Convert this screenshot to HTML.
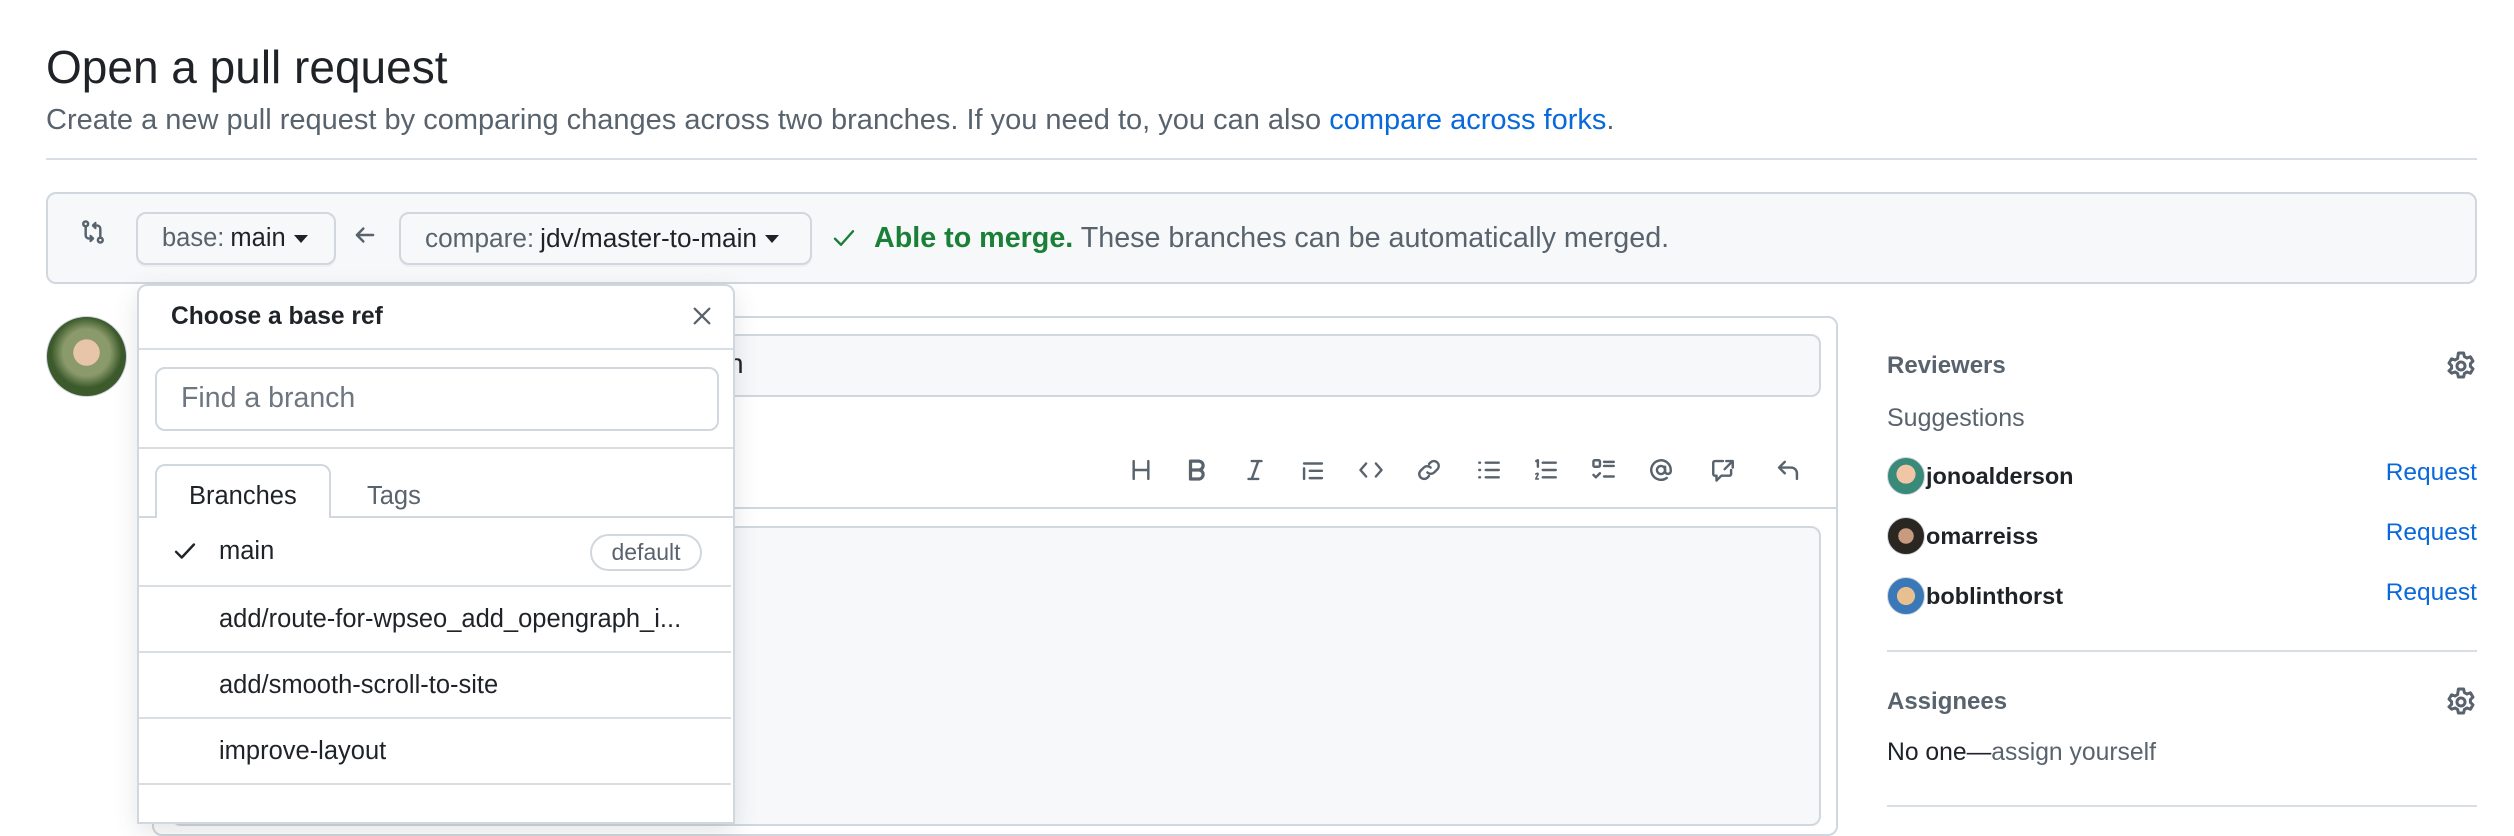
<!DOCTYPE html>
<html><head><meta charset="utf-8"><style>
*{box-sizing:border-box;margin:0;padding:0}
body{width:2514px;height:808px;overflow:hidden;background:#fff;font-family:"Liberation Sans",Arial,sans-serif;color:#1f2328;position:relative}
.a{position:absolute}
.btn{position:absolute;background:#f6f8fa;border:2px solid #d0d7de;border-radius:10px;font-size:25.5px;color:#59636e;display:flex;align-items:center;padding-left:24px;box-shadow:0 2px 0 rgba(31,35,40,.04)}
.btn b{font-weight:normal;color:#1f2328;margin-left:6px}
.caret{display:inline-block;width:0;height:0;border-left:7px solid transparent;border-right:7px solid transparent;border-top:8px solid #1f2328;margin-left:8px}
svg.i{position:absolute;fill:none;stroke:#59636e;stroke-width:1.5;stroke-linecap:round;stroke-linejoin:round}
.row{position:absolute;left:0;width:592px;height:66px;border-top:2px solid #d8dee4;font-size:25.5px;display:flex;align-items:center;padding-left:80px;color:#1f2328}
.user{position:absolute;left:1887px;font-size:23.5px;font-weight:bold;display:flex;align-items:center}
.av{width:38px;height:38px;border-radius:50%;margin-right:1px;border:1px solid #d0d7de}
.req{position:absolute;right:37px;font-size:24.5px;color:#0969da}
</style></head><body>
<div class="a" style="left:46px;top:40px;font-size:46px;line-height:1.2">Open a pull request</div>
<div class="a" style="left:46px;top:104px;font-size:29px;color:#59636e">Create a new pull request by comparing changes across two branches. If you need to, you can also <span style="color:#0969da">compare across forks</span>.</div>
<div class="a" style="left:46px;top:158px;width:2431px;height:2px;background:#d8dee4"></div>

<div class="a" style="left:46px;top:192px;width:2431px;height:92px;background:#f6f8fa;border:2px solid #d0d7de;border-radius:10px"></div>
<svg class="i" style="left:80px;top:219px" width="26" height="26" viewBox="0 0 16 16"><circle cx="3.5" cy="3" r="1.5"/><path d="M3.5 4.5V10a2 2 0 0 0 2 2H8M6.5 10.5 8 12l-1.5 1.5"/><circle cx="12.5" cy="13" r="1.5"/><path d="M12.5 11.5V6a2 2 0 0 0-2-2H8M9.5 2.5 8 4l1.5 1.5"/></svg>
<div class="btn" style="left:136px;top:212px;width:200px;height:53px">base:<b>main</b><span class="caret"></span></div>
<svg class="i" style="left:352px;top:222px" width="26" height="26" viewBox="0 0 16 16"><path d="M13 8H3M7 4 3 8l4 4"/></svg>
<div class="btn" style="left:399px;top:212px;width:413px;height:53px;font-size:26.2px">compare:<b>jdv/master-to-main</b><span class="caret"></span></div>
<svg class="i" style="left:832px;top:226px;stroke:#1a7f37;stroke-width:1.6" width="24" height="24" viewBox="0 0 16 16"><path d="M2 8.5 6 12.5 14 3.5"/></svg>
<div class="a" style="left:874px;top:222px;font-size:28.7px;color:#59636e"><b style="color:#1a7f37">Able to merge.</b> These branches can be automatically merged.</div>

<div class="a" style="left:46px;top:316px;width:81px;height:81px;border-radius:50%;background:radial-gradient(circle at 50% 45%,#e8c4a8 0 22%,#8a9a6a 23% 40%,#3c5a2c 60%);border:1px solid #d0d7de"></div>

<div class="a" style="left:152px;top:316px;width:1686px;height:520px;border:2px solid #d0d7de;border-radius:10px"></div>
<div class="a" style="left:171px;top:334px;width:1650px;height:63px;background:#f6f8fa;border:2px solid #d0d7de;border-radius:10px"></div>
<div class="a" style="left:728px;top:348px;font-size:28px">n</div>
<div class="a" style="left:154px;top:507px;width:1682px;height:2px;background:#d0d7de"></div>
<div class="a" style="left:171px;top:526px;width:1650px;height:300px;background:#f6f8fa;border:2px solid #d0d7de;border-radius:10px"></div>

<svg class="i" style="left:1128px;top:457px" width="26" height="26" viewBox="0 0 16 16"><path d="M3.5 2.5v11M12.5 2.5v11M3.5 8h9"/></svg>
<svg class="i" style="left:1184px;top:457px;stroke-width:2" width="26" height="26" viewBox="0 0 16 16"><path d="M4 2.5h5a2.7 2.7 0 0 1 0 5.5H4zM4 8h5.5a2.8 2.8 0 0 1 0 5.5H4z"/></svg>
<svg class="i" style="left:1242px;top:457px" width="26" height="26" viewBox="0 0 16 16"><path d="M6 2.5h6M4 13.5h6M10 2.5l-4 11"/></svg>
<svg class="i" style="left:1300px;top:457px" width="26" height="26" viewBox="0 0 16 16"><path d="M2.5 4h11M2.5 7v6.5M6 8.5h7.5M6 13h7.5"/></svg>
<svg class="i" style="left:1358px;top:457px" width="26" height="26" viewBox="0 0 16 16"><path d="M5 4 1.5 8 5 12M11 4l3.5 4L11 12"/></svg>
<svg class="i" style="left:1416px;top:457px" width="26" height="26" viewBox="0 0 16 16"><path d="M7 9.5a3 3 0 0 0 4.2 0l2.2-2.2a3 3 0 0 0-4.2-4.2L8 4.3M9 6.5a3 3 0 0 0-4.2 0L2.6 8.7a3 3 0 0 0 4.2 4.2L8 11.7"/></svg>
<svg class="i" style="left:1476px;top:457px" width="26" height="26" viewBox="0 0 16 16"><path d="M6 3.5h8M6 8h8M6 12.5h8M2 3.5h.5M2 8h.5M2 12.5h.5"/></svg>
<svg class="i" style="left:1533px;top:457px" width="26" height="26" viewBox="0 0 16 16"><path d="M6 3.5h8M6 8h8M6 12.5h8M2 2.5l1-.5v4"/><path d="M1.7 10.5q1.3-1 1.5 0l-1.5 3h1.6" stroke-width="1"/></svg>
<svg class="i" style="left:1591px;top:457px" width="26" height="26" viewBox="0 0 16 16"><rect x="1.5" y="2" width="4" height="4" rx=".8"/><path d="M8 3h6M8 5.5h6M8 12h6M1.5 11l1.5 1.5L5.5 10"/></svg>
<svg class="i" style="left:1648px;top:457px" width="26" height="26" viewBox="0 0 16 16"><circle cx="8" cy="8" r="2.5"/><path d="M10.5 6v3a1.8 1.8 0 0 0 3.5 0V8a6 6 0 1 0-2.5 4.9"/></svg>
<svg class="i" style="left:1710px;top:457px" width="26" height="26" viewBox="0 0 16 16"><path d="M8 2.5H3a1 1 0 0 0-1 1v7a1 1 0 0 0 1 1h1v3l3-3h5a1 1 0 0 0 1-1V8M10 2.5h4v4M14 2.5l-5 5"/></svg>
<svg class="i" style="left:1775px;top:457px" width="26" height="26" viewBox="0 0 16 16"><path d="M6 3 2.5 6.5 6 10M2.5 6.5H10a3.5 3.5 0 0 1 3.5 3.5v3.5"/></svg>

<!-- dropdown -->
<div class="a" style="left:137px;top:284px;width:598px;height:540px;background:#fff;border:2px solid #d0d7de;border-radius:10px 10px 0 0;box-shadow:0 8px 24px rgba(66,74,83,.15);overflow:hidden">
 <div class="a" style="left:32px;top:17px;font-size:24.6px;font-weight:bold;color:#1f2328">Choose a base ref</div>
 <svg class="i" style="left:550px;top:17px;stroke-width:1.4" width="26" height="26" viewBox="0 0 16 16"><path d="M3.5 3.5l9 9M12.5 3.5l-9 9"/></svg>
 <div class="a" style="left:0;top:62px;width:598px;height:2px;background:#d8dee4"></div>
 <div class="a" style="left:16px;top:81px;width:564px;height:64px;border:2px solid #d0d7de;border-radius:10px;font-size:28.5px;color:#6e7781;padding:13px 24px">Find a branch</div>
 <div class="a" style="left:0;top:161px;width:598px;height:2px;background:#d8dee4"></div>
 <div class="a" style="left:16px;top:178px;width:176px;height:54px;border:2px solid #d0d7de;border-bottom:none;border-radius:10px 10px 0 0;background:#fff;z-index:2;font-size:25.5px;padding:16px 0 0 32px">Branches</div>
 <div class="a" style="left:0;top:230px;width:598px;height:2px;background:#d0d7de"></div>
 <div class="a" style="left:228px;top:196px;font-size:25.5px;color:#59636e">Tags</div>
 <div class="row" style="top:232px;border-top:none"><svg class="i" style="left:33px;top:20px;stroke:#1f2328" width="26" height="26" viewBox="0 0 16 16"><path d="M2.5 8.5 6 12l7.5-8"/></svg>main<span style="position:absolute;left:451px;top:16px;height:37px;width:112px;border:2px solid #d0d7de;border-radius:20px;font-size:23px;color:#59636e;text-align:center;line-height:33px">default</span></div>
 <div class="row" style="top:299px">add/route-for-wpseo_add_opengraph_i...</div>
 <div class="row" style="top:365px">add/smooth-scroll-to-site</div>
 <div class="row" style="top:431px">improve-layout</div>
 <div class="row" style="top:497px"></div>
</div>

<!-- sidebar -->
<div class="a" style="left:1887px;top:352px;font-size:24px;font-weight:bold;color:#59636e">Reviewers</div>
<svg class="i" style="left:2445px;top:350px" width="32" height="32" viewBox="0 0 16 16"><circle cx="8" cy="8" r="2"/><path d="M6.7 1.5h2.6l.4 1.8 1.3.7 1.7-.6 1.3 2.2-1.3 1.2v1.4l1.3 1.2-1.3 2.2-1.7-.6-1.3.7-.4 1.8H6.7l-.4-1.8-1.3-.7-1.7.6L2 10.4l1.3-1.2V7.8L2 6.6l1.3-2.2 1.7.6 1.3-.7z"/></svg>
<div class="a" style="left:1887px;top:404px;font-size:25px;color:#59636e">Suggestions</div>
<div class="user" style="top:457px"><div class="av" style="background:radial-gradient(circle at 50% 45%,#f0c6a4 0 35%,#3a8a7a 36%)"></div>jonoalderson</div><div class="req" style="top:459px">Request</div>
<div class="user" style="top:517px"><div class="av" style="background:radial-gradient(circle at 50% 50%,#c89a80 0 30%,#2a2622 31%)"></div>omarreiss</div><div class="req" style="top:519px">Request</div>
<div class="user" style="top:577px"><div class="av" style="background:radial-gradient(circle at 50% 50%,#e8c090 0 35%,#3a78b8 36%)"></div>boblinthorst</div><div class="req" style="top:579px">Request</div>
<div class="a" style="left:1887px;top:650px;width:590px;height:2px;background:#d8dee4"></div>
<div class="a" style="left:1887px;top:688px;font-size:24px;font-weight:bold;color:#59636e">Assignees</div>
<svg class="i" style="left:2445px;top:686px" width="32" height="32" viewBox="0 0 16 16"><circle cx="8" cy="8" r="2"/><path d="M6.7 1.5h2.6l.4 1.8 1.3.7 1.7-.6 1.3 2.2-1.3 1.2v1.4l1.3 1.2-1.3 2.2-1.7-.6-1.3.7-.4 1.8H6.7l-.4-1.8-1.3-.7-1.7.6L2 10.4l1.3-1.2V7.8L2 6.6l1.3-2.2 1.7.6 1.3-.7z"/></svg>
<div class="a" style="left:1887px;top:739px;font-size:24.7px;color:#1f2328">No one—<span style="color:#59636e">assign yourself</span></div>
<div class="a" style="left:1887px;top:805px;width:590px;height:2px;background:#d8dee4"></div>
</body></html>
